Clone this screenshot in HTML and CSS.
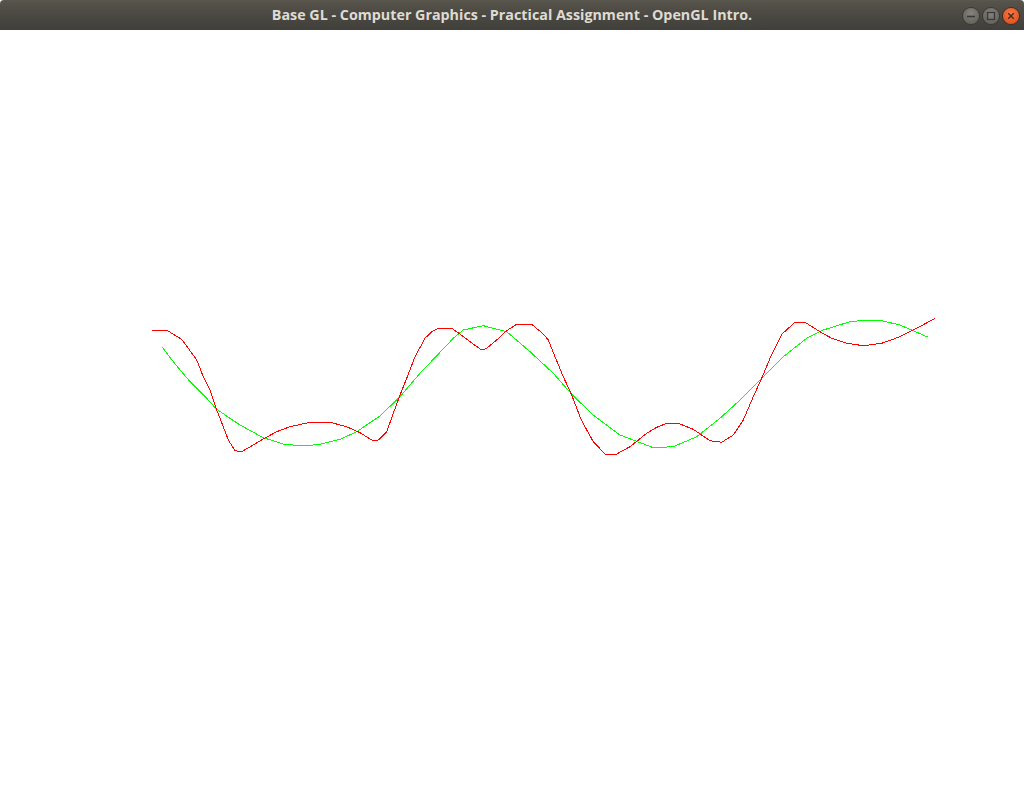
FILE: index.html
```html
<!DOCTYPE html>
<html>
<head>
<meta charset="utf-8">
<title>Base GL</title>
<link rel="stylesheet" href="styles.css">
</head>
<body>
<div class="window">
  <header class="titlebar">
    <div class="spacer"></div>
    <div class="title">Base GL - Computer Graphics - Practical Assignment - OpenGL Intro.</div>
    <div class="controls">
      <span class="btn btn-gray">
        <svg viewBox="0 0 16 16" width="16" height="16"><path d="M4 8.5h8" stroke="#3a3935" stroke-width="1.6" fill="none"/></svg>
      </span>
      <span class="btn btn-gray">
        <svg viewBox="0 0 16 16" width="16" height="16"><rect x="4.5" y="4.5" width="7" height="7" stroke="#3a3935" stroke-width="1.3" fill="none"/></svg>
      </span>
      <span class="btn btn-close">
        <svg viewBox="0 0 16 16" width="16" height="16"><path d="M5.2 5.2l5.6 5.6M10.8 5.2l-5.6 5.6" stroke="#4a2a1a" stroke-width="1.5" fill="none"/></svg>
      </span>
    </div>
  </header>
  <main class="canvas">
    <svg class="plot" viewBox="0 30 1024 768" width="1024" height="768">
      <polyline class="green" points="162.3,347.3 173.3,361.7 190,381.7 206.7,398.3 216.7,409.3 240,425 263.3,437.7 283.3,444 303.3,446 320,444.3 340,439.3 356.7,431.7 380,416 400,396.7 420,373.3 440,352.3 453.3,338.3 463.3,330 483.3,325.7 506.7,331.7 530,351.7 553.3,373.3 573.3,396 593.3,415 620,435 653.3,447.7 673.3,446.7 696.7,436.7 720,418.3 740,400 761.7,378.3 783.3,356.7 806.7,338.3 823.3,330 850,321.7 866.7,320 881.7,320.7 900,325 928.3,337.3"/>
      <polyline class="red" points="152.3,330 166.7,330 171.7,333.3 181.7,339.3 188.3,348.3 196.7,360 203.3,376.7 210,390 216.7,410 223.3,426.7 228.3,440 235,450.7 241.7,451.7 253.3,445 263.3,439 276.7,431.7 290,426.7 310,422.3 330,422.3 346.7,426.7 360,432.7 371.7,440 378.3,440 386.7,431.7 393.3,413.3 400,395 406.7,378.3 415,356.7 425,338.3 431.7,331.7 438.3,328.3 451.7,328.3 460,334 470,341.7 481.7,350 486.7,348.3 496.7,340 506.7,330.7 516.7,324.3 531.7,324.3 543.3,334 548.3,340 555,356.7 563.3,376.7 571.7,395 580,416.7 586.7,430 593.3,441.7 605,454 616.7,454 630,446.7 646.7,433.3 656.7,427.3 666.7,423.3 678.3,423.3 693.3,429.3 710,440.7 721.7,442.3 733.3,435 743.3,420 753.3,396.7 761.7,378.3 770,358.3 781.7,334.3 795,322.3 805,322.3 820,331.7 831.7,338.3 846.7,343.3 863.3,345.7 881.7,343.3 900,336.7 916.7,328.3 935,318.3"/>
    </svg>
  </main>
</div>
</body>
</html>
```

FILE: styles.css
```css
html, body {
  margin: 0;
  padding: 0;
  background: #ffffff;
}

.window {
  width: 1024px;
  height: 798px;
  display: flex;
  flex-direction: column;
  overflow: hidden;
}

.titlebar {
  height: 30px;
  flex: 0 0 30px;
  display: grid;
  grid-template-columns: 1fr auto 1fr;
  align-items: center;
  background: linear-gradient(to bottom, #5d5a52 0px, #57544c 1px, #4f4c45 10px, #403f3a 30px);
  border-radius: 4px 4px 0 0;
  box-sizing: border-box;
}

.title {
  font-family: "Open Sans", "DejaVu Sans", sans-serif;
  font-weight: 700;
  font-size: 14.3px;
  color: #dfdbd2;
  white-space: nowrap;
  line-height: 30px;
}

.controls {
  display: flex;
  justify-content: flex-end;
  align-items: center;
  gap: 4px;
  padding-right: 5px;
  padding-top: 1px;
}

.btn {
  width: 16px;
  height: 16px;
  border-radius: 50%;
  display: flex;
  align-items: center;
  justify-content: center;
  box-sizing: border-box;
}

.btn svg {
  display: block;
}

.btn-gray {
  background: radial-gradient(circle at 50% 35%, #85837d 0%, #6c6a65 60%, #5a5955 100%);
  box-shadow: 0 0 0 1px #3a3934;
}

.btn-close {
  background: radial-gradient(circle at 50% 35%, #f4794a 0%, #e85a26 60%, #d8481a 100%);
  box-shadow: 0 0 0 1px #3e2f26;
}

.canvas {
  flex: 1 1 auto;
  background: #ffffff;
}

.plot {
  display: block;
}

.plot polyline {
  fill: none;
  stroke-width: 1;
  shape-rendering: crispEdges;
}

.plot .green {
  stroke: #00ff00;
}

.plot .red {
  stroke: #ff0000;
}
```
